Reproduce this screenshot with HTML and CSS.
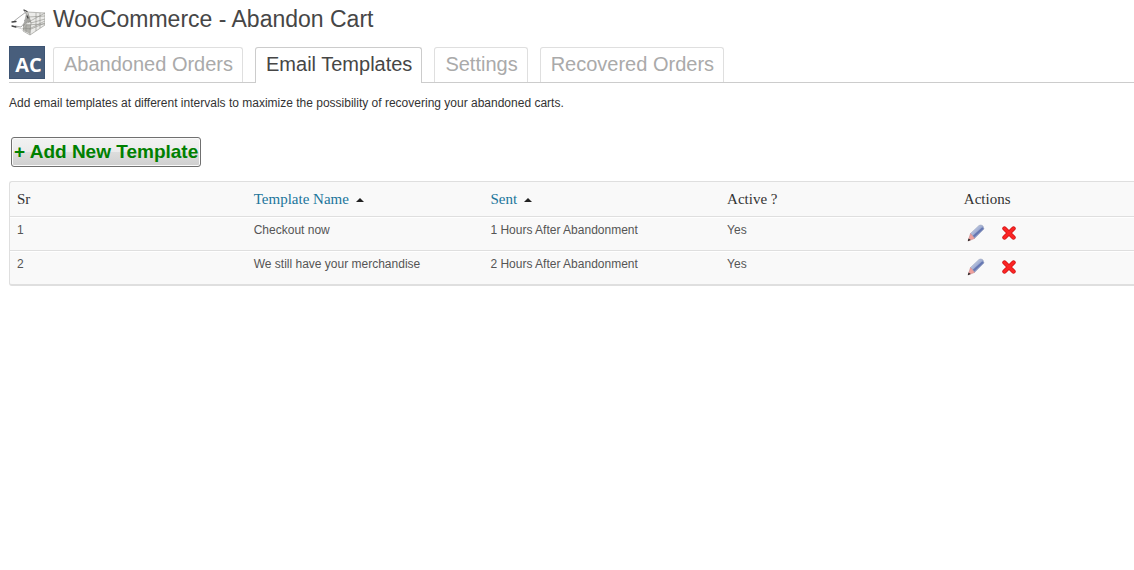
FILE: index.html
```html
<!DOCTYPE html>
<html lang="en">
<head>
<meta charset="utf-8">
<title>WooCommerce - Abandon Cart</title>
<link rel="stylesheet" href="styles.css">
</head>
<body>
<svg class="defs" aria-hidden="true">
  <defs>
    <linearGradient id="pencil-body" x1="0" y1="0" x2="1" y2="1">
      <stop offset="0" stop-color="#e3e8f4"/>
      <stop offset=".45" stop-color="#a3b0d4"/>
      <stop offset="1" stop-color="#5669a4"/>
    </linearGradient>
    <symbol id="pencil" viewBox="0 0 18 18">
      <path d="M3.500 9.500 12 1.500Q14 .2 16 2L17 5 7.500 14.500Z" fill="url(#pencil-body)" stroke="#9aa4c0" stroke-width=".6"/>
      <path d="M6.500 12.500 16 4" stroke="#6577b2" stroke-width="2"/>
      <path d="M3.500 9.500 7.500 14.500 1 17Z" fill="#f0a09c" stroke="#c58588" stroke-width=".5"/>
      <path d="M1.500 14.500 3.800 16 .8 17.200Z" fill="#222"/>
    </symbol>
    <symbol id="cross" viewBox="0 0 14 14">
      <path d="M2.500 2.500 11.500 11.500M11.500 2.500 2.500 11.500" stroke="#cf1111" stroke-width="4.400" stroke-linecap="round"/>
      <path d="M2.500 2.500 11.500 11.500M11.500 2.500 2.500 11.500" stroke="#fb2525" stroke-width="3" stroke-linecap="round"/>
    </symbol>
  </defs>
</svg>
<header class="page-title">
  <svg class="cart" viewBox="0 0 36 28" fill="none" aria-hidden="true">
    <path d="M17 3 36 4 36 16 21 26 14 22Z" fill="#ebebe9"/>
    <path d="M19 4 22 13 15 15Z" fill="#a4a4a0"/>
    <path d="M14 15 22 16 21 25 14 21Z" fill="#b2b2ad"/>
    <path d="M18 3 36 4 36 16 21 26 14 22 15 15ZM36 4 14 16M14 16 36 15M22 13 21 26M19 4 22 14 36 10M19 8 36 7M20 20 36 12M27 4 27 22M31 4 31 19M14 19 22 20 36 14M17 15 17 23" stroke="#8e8e89" stroke-width=".6"/>
    <path d="M15 1.500 19 8 15 12M17 3 9 9 4 13M6 17 12 18 18 11" stroke="#aaa"/>
    <path d="M3 13 7 12.500M3 17 7 18M15 1 18 2.500M18 7 19 9" stroke="#444" stroke-width="1.300" stroke-linecap="round"/>
    <path d="M7 18 13 20 19 13" stroke="#c6c6c3" stroke-width=".7"/>
  </svg>
  <h1>WooCommerce - Abandon Cart</h1>
</header>
<nav class="tabs">
  <span class="logo">AC</span>
  <a class="tab" href="#orders">Abandoned Orders</a>
  <a class="tab active" href="#templates" aria-current="page">Email Templates</a>
  <a class="tab" href="#settings">Settings</a>
  <a class="tab" href="#recovered">Recovered Orders</a>
</nav>
<main>
  <p class="intro">Add email templates at different intervals to maximize the possibility of recovering your abandoned carts.</p>
  <button class="add" type="button">+ Add New Template</button>
  <div class="panel">
    <table>
      <thead>
        <tr>
          <th scope="col">Sr</th>
          <th scope="col"><a href="#name">Template Name<span class="arrow"></span></a></th>
          <th scope="col"><a href="#sent">Sent<span class="arrow"></span></a></th>
          <th scope="col">Active ?</th>
          <th scope="col" class="actions">Actions</th>
        </tr>
      </thead>
      <tbody>
        <tr>
          <td>1</td><td>Checkout now</td><td>1 Hours After Abandonment</td><td>Yes</td>
          <td><div class="icons"><a href="#edit-1" aria-label="Edit"><svg class="edit"><use href="#pencil"/></svg></a><a href="#delete-1" aria-label="Delete"><svg class="delete"><use href="#cross"/></svg></a></div></td>
        </tr>
        <tr>
          <td>2</td><td>We still have your merchandise</td><td>2 Hours After Abandonment</td><td>Yes</td>
          <td><div class="icons"><a href="#edit-2" aria-label="Edit"><svg class="edit"><use href="#pencil"/></svg></a><a href="#delete-2" aria-label="Delete"><svg class="delete"><use href="#cross"/></svg></a></div></td>
        </tr>
      </tbody>
    </table>
  </div>
</main>
</body>
</html>
```
FILE: styles.css
```css
* { box-sizing: border-box; }
body {
  margin: 0;
  padding: 4px 0 0 9px;
  background: #fff;
  color: #333;
  font: 12px/18px "Liberation Sans", Arial, sans-serif;
}
a { text-decoration: none; }
svg { display: block; }
.defs { position: absolute; width: 0; height: 0; }
.page-title { display: flex; gap: 8px; height: 42px; }
.cart { width: 36px; height: 28px; margin-top: 5px; }
.page-title h1 {
  margin: 0;
  color: #464646;
  font-size: 23px;
  font-weight: 400;
  line-height: 30px;
}
.tabs {
  display: flex;
  align-items: flex-end;
  gap: 12px;
  height: 37px;
  border-bottom: 1px solid #ccc;
}
.logo {
  align-self: flex-start;
  width: 36px;
  height: 33px;
  margin-right: -4px;
  padding-left: 3px;
  border: 1px solid #3d5473;
  background: #485e7c;
  color: #fff;
  font: bold 20px/36px "Open Sans", sans-serif;
  text-align: center;
}
.tab {
  height: 35px;
  padding: 0 9px 0 10px;
  border: 1px solid #dfdfdf;
  border-bottom: 0;
  border-radius: 3px 3px 0 0;
  color: #aaa;
  font-size: 20px;
  line-height: 33px;
  white-space: nowrap;
}
.tab.active {
  height: 36px;
  margin-bottom: -1px;
  border-color: #ccc;
  background: #fff;
  color: #464646;
}
.intro { margin: 11px 0 25px; }
.add {
  display: block;
  height: 30px;
  margin: 0 0 14px 2px;
  padding: 0 2px;
  border: 1px solid #707070;
  border-radius: 3px;
  background: linear-gradient(#f2f2f2, #ebebeb 50%, #ddd 50%, #cfcfcf);
  box-shadow: inset 0 0 0 1px #fafafa;
  color: green;
  font: bold 19px/28px "Liberation Sans", Arial, sans-serif;
}
.panel {
  border: 1px solid #dfdfdf;
  border-width: 1px 0 2px 1px;
  border-radius: 3px 0 0 3px;
  background: #f9f9f9;
}
table {
  width: 100%;
  table-layout: fixed;
  border-collapse: separate;
  border-spacing: 0;
}
th, td { padding: 0 7px; text-align: left; }
th {
  width: 21.06%;
  height: 35px;
  border-bottom: 1px solid #dfdfdf;
  color: #333;
  font: 15px/20px "Liberation Serif", Georgia, serif;
}
th.actions { width: auto; }
th a { color: #21759b; }
.arrow {
  display: inline-block;
  margin-left: 7px;
  border: 4px solid transparent;
  border-top: 0;
  border-bottom-color: #222;
  vertical-align: 2px;
}
td {
  height: 34px;
  padding-top: 3px;
  border-top: 1px solid #fff;
  border-bottom: 1px solid #dfdfdf;
  color: #555;
  vertical-align: top;
}
tr:last-child td { height: 33px; border-bottom: 0; }
.icons { display: flex; gap: 17px; padding: 3px 0 0 3px; }
.edit { width: 18px; height: 18px; }
.delete { width: 14px; height: 14px; margin-top: 2px; }
```
